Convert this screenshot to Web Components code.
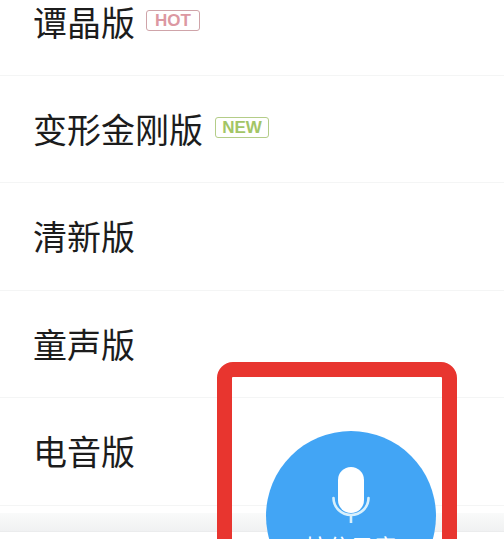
<!DOCTYPE html>
<html lang="zh">
<head>
<meta charset="utf-8">
<title>变声</title>
<style>
  html, body { margin: 0; height: 100%; background: #fff; overflow: hidden; }
  body { font-family: "Noto Sans CJK SC", "Noto Sans", sans-serif; }
</style>
</head>
<body>
<voice-screen>
  <voice-row label="谭晶版" badge="HOT" tone="hot"></voice-row>
  <voice-row label="变形金刚版" badge="NEW" tone="new"></voice-row>
  <voice-row label="清新版"></voice-row>
  <voice-row label="童声版"></voice-row>
  <voice-row label="电音版"></voice-row>
  <record-button slot="overlay" label="按住录音"></record-button>
</voice-screen>

<script>
  class VoiceScreen extends HTMLElement {
    constructor() {
      super();
      this.attachShadow({ mode: 'open' });
    }

    connectedCallback() {
      this.shadowRoot.innerHTML = `
        <style>
          :host {
            display: block;
            position: relative;
            width: 504px;
            height: 539px;
            overflow: hidden;
            background: #fff;
          }
          .dock {
            height: 18px;
            margin-top: 7px;
            background: linear-gradient(#f9fafa, #f0f1f2);
            border-bottom: 1px solid #ebeced;
          }
        </style>
        <div class="list"><slot></slot></div>
        <div class="dock"></div>
        <slot name="overlay"></slot>
      `;
    }
  }

  class VoiceRow extends HTMLElement {
    constructor() {
      super();
      this.attachShadow({ mode: 'open' });
    }

    connectedCallback() {
      const badge = this.getAttribute('badge');
      const tone = this.getAttribute('tone') || '';
      this.shadowRoot.innerHTML = `
        <style>
          :host {
            display: flex;
            align-items: center;
            box-sizing: border-box;
            height: 107.5px;
            padding-left: 33px;
            border-bottom: 1px solid #f4f5f5;
            color: #1c1c1c;
          }
          /* first row is scrolled under the top edge */
          :host(:first-child) {
            height: 75.5px;
            padding-bottom: 31px;
          }
          .label {
            font-size: 34px;
            line-height: 40px;
            font-weight: 400;
          }
          .badge {
            box-sizing: border-box;
            width: 54px;
            height: 21px;
            margin-left: 12px;
            margin-top: -2px;
            border: 1px solid;
            border-radius: 3px;
            font: 700 17px/19px "Liberation Sans", Arial, sans-serif;
            text-align: center;
          }
          .hot { color: #dc98a2; border-color: #cfa4a9; margin-left: 11px; }
          .new { color: #a3c566; border-color: #b4cd88; }
        </style>
        <span class="label">${this.getAttribute('label')}</span>
        ${badge ? `<span class="badge ${tone}">${badge}</span>` : ''}
      `;
    }
  }

  class RecordButton extends HTMLElement {
    constructor() {
      super();
      this.attachShadow({ mode: 'open' });
    }

    connectedCallback() {
      this.shadowRoot.innerHTML = `
        <style>
          :host {
            display: block;
            position: absolute;
            left: 217px;
            top: 362px;
            box-sizing: border-box;
            width: 240px;
            height: 200px;
            border: 15px solid #e8352f;
            border-radius: 16px;
          }
          .circle {
            display: flex;
            flex-direction: column;
            align-items: center;
            box-sizing: border-box;
            width: 170px;
            height: 170px;
            margin: 54px 0 0 34px;
            padding-top: 36px;
            border-radius: 50%;
            background: #42a5f5;
            color: #fff;
          }
          svg { display: block; width: 38px; height: 56px; }
          .text {
            margin-top: 8px;
            font-size: 23px;
            line-height: 30px;
            white-space: nowrap;
          }
        </style>
        <div class="circle">
          <svg viewBox="0 0 38 56" fill="none">
            <rect x="6" y="0" width="26" height="46" rx="13" fill="#fff"/>
            <path d="M1.5 31a17.500 17 0 0 0 35 0" stroke="#d8f0fc" stroke-width="2.6" stroke-linecap="round"/>
            <path d="M19 48v8" stroke="#d8f0fc" stroke-width="2.6"/>
          </svg>
          <span class="text">${this.getAttribute('label')}</span>
        </div>
      `;
    }
  }

  customElements.define('voice-screen', VoiceScreen);
  customElements.define('voice-row', VoiceRow);
  customElements.define('record-button', RecordButton);
</script>
</body>
</html>
